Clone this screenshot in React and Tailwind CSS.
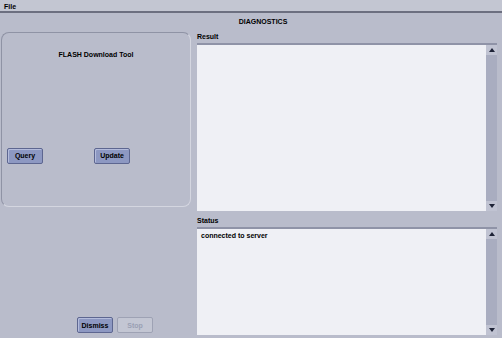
import React from 'react';

const font = "font-['Liberation_Sans',Arial,sans-serif]";

function Btn({ children, disabled }) {
    return (
        <button
            className={`h-[16px] w-[36px] rounded-[2px] border text-[7px] font-bold leading-none ${disabled
                ? 'border-[#9ea2b4] bg-[#c3c6d3] text-[#9aa0b4]'
                : 'border-[#5d6690] bg-[#8d98c2] text-[#000] shadow-[inset_1px_1px_0_#b4bcdc]'}`}
        >
            {children}
        </button>
    );
}

function TextBox({ text, className }) {
    return (
        <div className={`flex border-t-2 border-[#8f93a7] ${className}`}>
            <div className="flex-1 bg-[#eff0f5] pl-[4px] pt-[2px] text-[7px] font-bold text-[#000]">{text}</div>
            <div className="flex w-[11px] flex-col justify-between bg-[#a9adc0]">
                <div className="flex h-[10px] items-center justify-center bg-[#c0c3d2]">
                    <div className="h-0 w-0 border-x-[3px] border-b-[4px] border-x-transparent border-b-[#1d2236]" />
                </div>
                <div className="flex h-[10px] items-center justify-center bg-[#c0c3d2]">
                    <div className="h-0 w-0 border-x-[3px] border-t-[4px] border-x-transparent border-t-[#1d2236]" />
                </div>
            </div>
        </div>
    );
}

export default function App() {
    return (
        <div className={`${font} h-[338px] w-[502px] bg-[#b9bccb] text-[#000]`}>
            <div className="h-[13px] border-b-2 border-[#6c6f80] bg-[#c3c6d2] pl-[4px] text-[7px] font-bold leading-[14px]">
                File
            </div>
            <div className="relative h-[17px] text-center text-[7px] font-bold leading-[17px]">
                <span className="ml-[24px]">DIAGNOSTICS</span>
            </div>
            <div className="flex">
                <div className="flex w-[197px] flex-col pl-[1px]">
                    <div className="mt-[2px] h-[175px] w-[190px] rounded-[8px] border border-[#d4d6e0] border-l-[#8f93a5] border-t-[#8f93a5]">
                        <div className="mt-[17px] text-center text-[7px] font-bold">FLASH Download Tool</div>
                        <div className="mt-[87px] flex gap-[51px] pl-[5px]">
                            <Btn>Query</Btn>
                            <Btn>Update</Btn>
                        </div>
                    </div>
                    <div className="mt-[110px] flex gap-[4px] pl-[76px]">
                        <Btn>Dismiss</Btn>
                        <Btn disabled>Stop</Btn>
                    </div>
                </div>
                <div className="flex w-[300px] flex-col">
                    <div className="h-[13px] text-[7px] font-bold leading-[13px]">Result</div>
                    <TextBox className="h-[168px]" />
                    <div className="h-[16px] pt-[4px] text-[7px] font-bold leading-[12px]">Status</div>
                    <TextBox className="h-[108px]" text="connected to server" />
                </div>
            </div>
        </div>
    );
}
